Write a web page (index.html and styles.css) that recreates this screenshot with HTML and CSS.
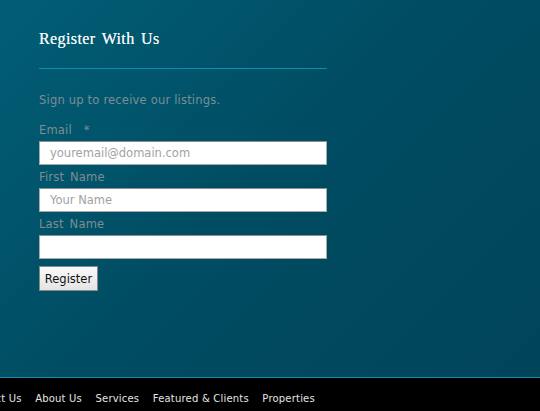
FILE: index.html
```html
<!DOCTYPE html>
<html>
<head>
<meta charset="utf-8">
<link rel="stylesheet" href="styles.css">
</head>
<body>
<main class="main">
  <section class="register">
    <h2 class="title">Register With Us</h2>
    <p class="intro">Sign up to receive our listings.</p>
    <form class="form">
      <label class="label">Email <span class="req">*</span></label>
      <input class="field" type="text" placeholder="youremail@domain.com">
      <label class="label">First Name</label>
      <input class="field" type="text" placeholder="Your Name">
      <label class="label">Last Name</label>
      <input class="field" type="text">
      <button class="btn" type="button">Register</button>
    </form>
  </section>
</main>
<footer class="footer">
  <nav class="nav">
    <a class="nav-item">Contact Us</a>
    <a class="nav-item">About Us</a>
    <a class="nav-item">Services</a>
    <a class="nav-item">Featured &amp; Clients</a>
    <a class="nav-item">Properties</a>
  </nav>
</footer>
</body>
</html>
```
FILE: styles.css
```css
html, body {
  margin: 0;
  padding: 0;
  height: 100%;
}
body {
  display: flex;
  flex-direction: column;
  background: #000;
  font-family: "DejaVu Sans", Verdana, sans-serif;
  overflow: hidden;
}
.main {
  height: 377px;
  background: linear-gradient(135deg, #015e76 0%, #004c62 50%, #00445a 100%);
  border-bottom: 1px solid #1b8ba3;
  box-sizing: content-box;
}
.register {
  width: 288px;
  margin-left: 39px;
  padding-top: 29px;
}
.title {
  margin: 0;
  font-family: "Liberation Serif", "Times New Roman", serif;
  font-weight: normal;
  font-size: 16px;
  line-height: 20px;
  color: #f2f6f7;
  letter-spacing: 0.4px;
  word-spacing: 2px;
  padding-bottom: 19px;
  border-bottom: 1px solid #0a8fb2;
  text-shadow: 0 0 0.4px #f2f6f7;
}
.intro {
  margin: 24px 0 0;
  font-size: 11.5px;
  color: #7c8e93;
  letter-spacing: 0.2px;
}
.form {
  display: flex;
  flex-direction: column;
  margin-top: 17px;
}
.label {
  font-size: 11.5px;
  color: #7f8d91;
  line-height: 12px;
  letter-spacing: 0.2px;
  word-spacing: 2px;
  margin-bottom: 5px;
}
.req {
  margin-left: 6px;
}
.field {
  box-sizing: border-box;
  width: 288px;
  height: 24px;
  margin: 0 0 6px;
  padding: 0 10px;
  border: 1px solid #a9a9a9;
  border-top-color: #8d8d8d;
  background: #fff;
  font-family: "DejaVu Sans", Verdana, sans-serif;
  font-size: 11.5px;
  color: #333;
  outline: none;
}
.field::placeholder {
  color: #a2a2a2;
}
.btn {
  align-self: flex-start;
  box-sizing: border-box;
  width: 59px;
  height: 25px;
  margin-top: 1px;
  padding: 0;
  border: 1px solid #8a8a8a;
  background: linear-gradient(#fafafa, #e4e4e4);
  font-family: "DejaVu Sans", Verdana, sans-serif;
  font-size: 11.5px;
  color: #111;
}
.footer {
  flex: 1;
  background: #000;
}
.nav {
  display: flex;
  gap: 13.5px;
  margin-left: -35px;
  padding-top: 15px;
}
.nav-item {
  font-size: 10px;
  color: #e4e4e4;
  letter-spacing: 0.2px;
  white-space: nowrap;
}
```
